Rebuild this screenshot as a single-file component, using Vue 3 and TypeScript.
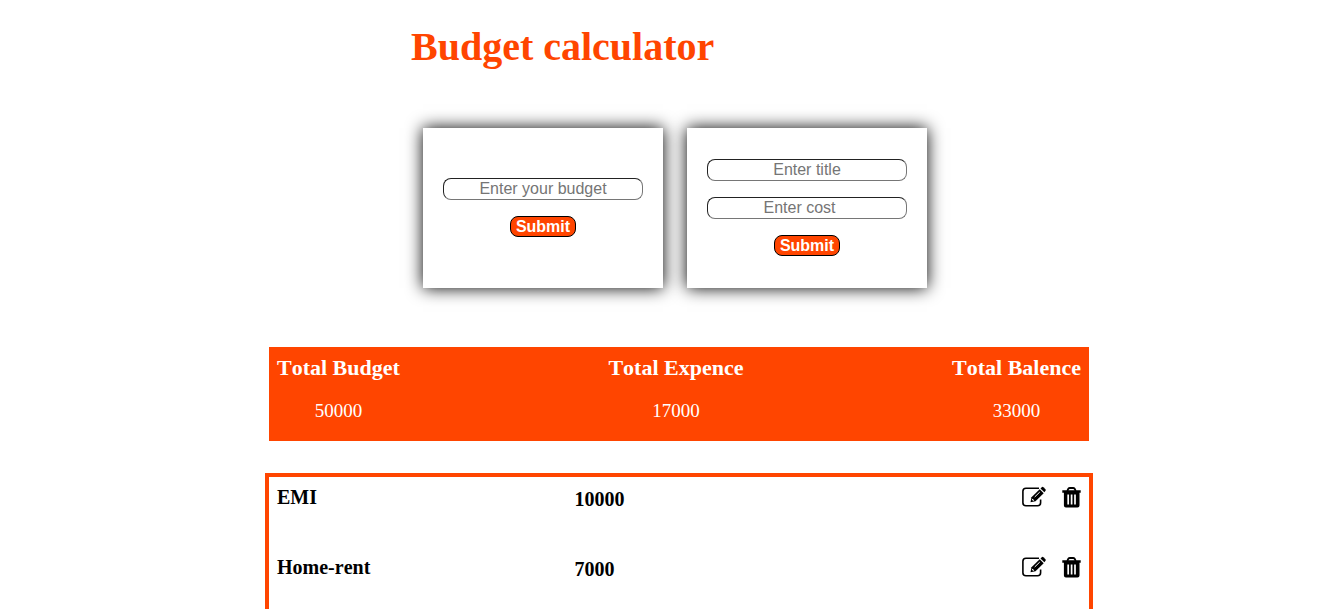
<script setup lang="ts">
import { computed, ref } from 'vue'

interface Expense {
  id: number
  title: string
  cost: number
}

const budget = ref(50000)
const budgetInput = ref('')
const titleInput = ref('')
const costInput = ref<number | string>('')
const expenses = ref<Expense[]>([
  { id: 1, title: 'EMI', cost: 10000 },
  { id: 2, title: 'Home-rent', cost: 7000 },
])

const totalExpense = computed(() => expenses.value.reduce((sum, item) => sum + item.cost, 0))
const totals = computed(() => [
  { label: 'Total Budget', value: budget.value },
  { label: 'Total Expence', value: totalExpense.value },
  { label: 'Total Balence', value: budget.value - totalExpense.value },
])

function submitBudget() {
  const value = Number(budgetInput.value)
  if (value > 0) budget.value = value
  budgetInput.value = ''
}

function submitExpense() {
  const cost = Number(costInput.value)
  if (!titleInput.value || !(cost > 0)) return
  expenses.value.push({ id: Date.now(), title: titleInput.value, cost })
  titleInput.value = ''
  costInput.value = ''
}

function removeExpense(id: number) {
  expenses.value = expenses.value.filter((item) => item.id !== id)
}

function editExpense(item: Expense) {
  titleInput.value = item.title
  costInput.value = item.cost
  removeExpense(item.id)
}
</script>

<template>
  <main class="page">
    <div class="entry">
      <h1>Budget calculator</h1>
      <div class="cards">
        <form class="card" @submit.prevent="submitBudget">
          <input v-model="budgetInput" type="text" aria-label="Budget" placeholder="Enter your budget" />
          <button class="submit" type="submit">Submit</button>
        </form>
        <form class="card" @submit.prevent="submitExpense">
          <input v-model="titleInput" type="text" aria-label="Title" placeholder="Enter title" />
          <input v-model="costInput" type="number" aria-label="Cost" placeholder="Enter cost" />
          <button class="submit" type="submit">Submit</button>
        </form>
      </div>
    </div>

    <div class="report">
      <section class="totals">
        <div v-for="total in totals" :key="total.label" class="total">
          <h2>{{ total.label }}</h2>
          <p>{{ total.value }}</p>
        </div>
      </section>

      <ul class="expenses">
        <li v-for="item in expenses" :key="item.id" class="expense">
          <h3>{{ item.title }}</h3>
          <span class="cost">{{ item.cost }}</span>
          <span class="actions">
            <button class="icon" type="button" aria-label="Edit" @click="editExpense(item)">
              <svg width="24" height="24" viewBox="0 0 24 24" fill="none" stroke="#000">
                <path d="M17 3.2H4Q0.900 3.200 0.900 6.200V17.700Q0.900 20.700 4 20.700H15.500Q18.600 20.700 18.600 17.700V14.500" stroke-width="1.6" />
                <path d="M8.500 17.200L9.500 12.300L17.700 4.300L21.700 8.200L13.500 16.200Z" fill="#000" stroke="none" />
                <path d="M18.500 3.500L20 2.100Q20.700 1.600 21.400 2.200L23.500 4.300Q24 5 23.500 5.700L22.400 7.200Z" fill="#000" stroke="none" />
                <path d="M12.700 12L17.800 7" stroke="#fff" stroke-width="1" />
                <path d="M10.200 14.200L11.700 15.700" stroke="#fff" stroke-width="1.2" />
              </svg>
            </button>
            <button class="icon" type="button" aria-label="Delete" @click="removeExpense(item.id)">
              <svg width="19" height="24" viewBox="0 0 19 24" fill="none" stroke="#000">
                <path d="M5.400 6L6 4.300Q6.500 3 7.700 3H11.300Q12.500 3 13 4.300L13.600 6" stroke-width="1.9" />
                <path d="M0.300 5.300H18.700V7.700H17.500V20.500Q17.500 22.500 15.500 22.500H3.900Q1.900 22.500 1.900 20.500V7.700H0.300Z" fill="#000" stroke="none" />
                <path d="M6.200 9.500V19.500M9.600 9.500V19.500M13 9.500V19.500" stroke="#fff" stroke-width="1.7" />
              </svg>
            </button>
          </span>
        </li>
      </ul>
    </div>
  </main>
</template>

<style>
body {
  margin: 0;
  background: #fff;
}
</style>

<style scoped>
.page {
  font-family: "Liberation Serif", "Times New Roman", serif;
  font-kerning: none;
  color: #000;
}

h1,
h2,
h3,
p {
  margin: 0;
}

.entry {
  width: fit-content;
  margin: 0 auto;
  padding: 24px 0 0 8px;
}

h1 {
  color: orangered;
  font-size: 40px;
  line-height: 46px;
}

.cards {
  display: flex;
  gap: 24px;
  padding: 58px 12px 0;
}

.card {
  display: flex;
  flex-direction: column;
  align-items: center;
  justify-content: center;
  gap: 16px;
  box-sizing: border-box;
  width: 240px;
  min-height: 160px;
  padding: 20px 20px 21px;
  background: #fff;
  box-shadow: 0 0 16px #000;
}

.card input {
  box-sizing: border-box;
  width: 100%;
  height: 22px;
  padding: 0 2px;
  border: 1px solid #767676;
  border-top-color: #222;
  border-left-color: #222;
  border-radius: 8px;
  background: #fff;
  font: 16px "Liberation Sans", Arial, sans-serif;
  text-align: center;
}

.card input::placeholder {
  color: #757575;
}

.submit {
  height: 21px;
  padding: 0 5px;
  border: 1px solid #000;
  border-radius: 8px;
  background: orangered;
  color: #fff;
  font: bold 16px/18px "Liberation Sans", Arial, sans-serif;
}

.report {
  max-width: 828px;
  margin: 59px auto 0;
  padding-left: 16px;
}

.totals {
  display: flex;
  justify-content: space-between;
  margin: 0 4px;
  padding: 8px 8px 19px;
  background: orangered;
  color: #fff;
  text-align: center;
}

.total h2 {
  font-size: 22px;
  line-height: 26px;
}

.total p {
  margin-top: 19px;
  font-size: 19px;
  line-height: 22px;
}

.expenses {
  margin: 32px 0 0;
  padding: 8px;
  border: 4px solid orangered;
  list-style: none;
}

.expense {
  display: grid;
  grid-template-columns: 37% 1fr auto;
  align-items: start;
  min-height: 70px;
  font-size: 20px;
  line-height: 24px;
}

.expense h3 {
  font-size: 20px;
}

.cost {
  padding-top: 2px;
  font-weight: bold;
}

.actions {
  display: flex;
  gap: 16px;
}

.icon {
  padding: 0;
  border: 0;
  background: none;
  cursor: pointer;
}

.icon svg {
  display: block;
}
</style>
